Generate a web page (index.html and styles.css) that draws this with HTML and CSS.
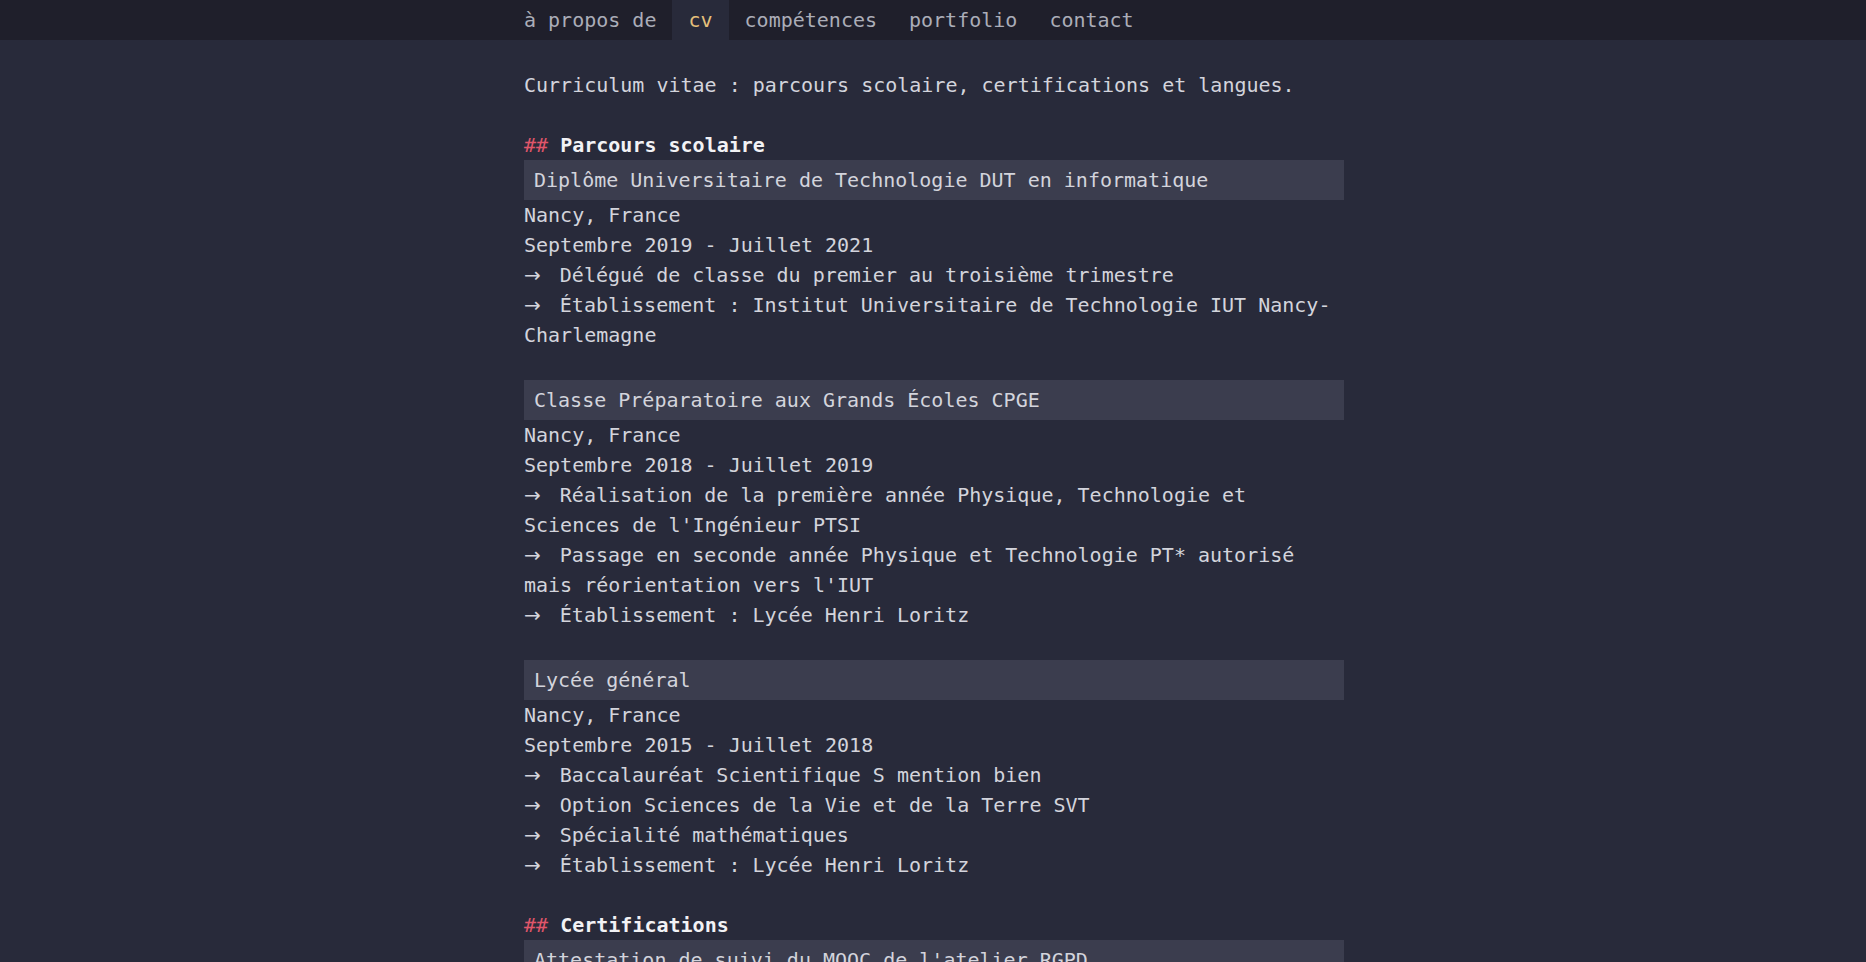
FILE: index.html
```html
<!DOCTYPE html>
<html lang="fr">
<head>
<meta charset="utf-8">
<title>cv</title>
<link rel="stylesheet" href="styles.css">
</head>
<body>
<nav class="topnav">
  <ul class="nav-list">
    <li class="nav-item">à propos de</li>
    <li class="nav-item is-active">cv</li>
    <li class="nav-item">compétences</li>
    <li class="nav-item">portfolio</li>
    <li class="nav-item">contact</li>
  </ul>
</nav>
<main class="page">
  <p class="intro">Curriculum vitae : parcours scolaire, certifications et langues.</p>

  <section class="cv-section">
    <h2 class="section-title"><span class="hash">##</span> Parcours scolaire</h2>

    <article class="entry">
      <h3 class="entry-title">Diplôme Universitaire de Technologie DUT en informatique</h3>
      <p class="line">Nancy, France</p>
      <p class="line">Septembre 2019 - Juillet 2021</p>
      <p class="line"><span class="arrow">→</span> Délégué de classe du premier au troisième trimestre</p>
      <p class="line"><span class="arrow">→</span> Établissement : Institut Universitaire de Technologie IUT Nancy-Charlemagne</p>
    </article>

    <article class="entry">
      <h3 class="entry-title">Classe Préparatoire aux Grands Écoles CPGE</h3>
      <p class="line">Nancy, France</p>
      <p class="line">Septembre 2018 - Juillet 2019</p>
      <p class="line"><span class="arrow">→</span> Réalisation de la première année Physique, Technologie et Sciences de l'Ingénieur PTSI</p>
      <p class="line"><span class="arrow">→</span> Passage en seconde année Physique et Technologie PT* autorisé mais réorientation vers l'IUT</p>
      <p class="line"><span class="arrow">→</span> Établissement : Lycée Henri Loritz</p>
    </article>

    <article class="entry">
      <h3 class="entry-title">Lycée général</h3>
      <p class="line">Nancy, France</p>
      <p class="line">Septembre 2015 - Juillet 2018</p>
      <p class="line"><span class="arrow">→</span> Baccalauréat Scientifique S mention bien</p>
      <p class="line"><span class="arrow">→</span> Option Sciences de la Vie et de la Terre SVT</p>
      <p class="line"><span class="arrow">→</span> Spécialité mathématiques</p>
      <p class="line"><span class="arrow">→</span> Établissement : Lycée Henri Loritz</p>
    </article>
  </section>

  <section class="cv-section">
    <h2 class="section-title"><span class="hash">##</span> Certifications</h2>
    <article class="entry">
      <h3 class="entry-title">Attestation de suivi du MOOC de l'atelier RGPD</h3>
    </article>
  </section>
</main>
</body>
</html>
```

FILE: styles.css
```css
html, body {
  margin: 0;
  padding: 0;
  background: #282a3a;
}

body {
  font-family: "DejaVu Sans Mono", "Liberation Mono", monospace;
  font-size: 20px;
  line-height: 30px;
  color: #d3d4dc;
}

.topnav {
  background: #1f1f2b;
}

.nav-list {
  list-style: none;
  margin: 0 auto;
  padding: 0 0 0 2px;
  width: 852px;
  display: flex;
}

.nav-item {
  padding: 5px 16px;
  line-height: 30px;
  color: #abadb8;
}

.nav-item.is-active {
  background: #282a3a;
  color: #e5c07b;
}

.page {
  width: 820px;
  margin: 0 auto;
  padding: 30px 0 0 2px;
}

.intro {
  margin: 0 0 30px;
}

.cv-section {
  margin: 0;
}

.section-title {
  margin: 0;
  font-size: 20px;
  line-height: 30px;
  font-weight: bold;
  color: #f2f2f5;
}

.hash {
  color: #e0566a;
  font-weight: normal;
}

.entry {
  margin: 0 0 30px;
}

.entry-title {
  margin: 0;
  padding: 5px 10px;
  background: #3b3d4e;
  font-size: 20px;
  line-height: 30px;
  font-weight: normal;
  color: #d3d4dc;
}

.line {
  margin: 0;
}

.arrow {
  font-family: "DejaVu Sans", sans-serif;
  margin-right: 7px;
}
```
